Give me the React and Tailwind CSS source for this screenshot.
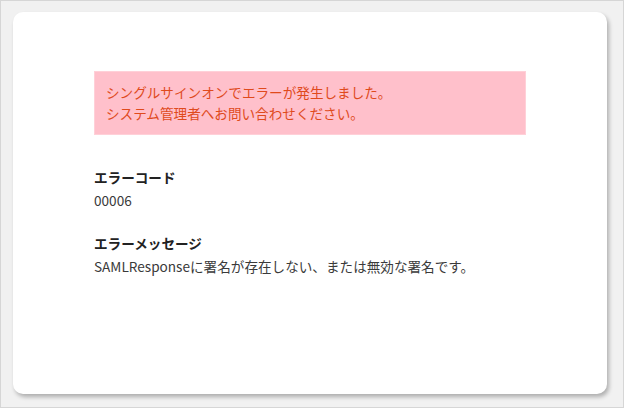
export default function App() {
  return (
    <div
      className="w-[624px] h-[408px] border border-[#d6d6d6] bg-[#f1f1f1] pt-[11px] pl-[12px] pr-[16px] pb-[13px] text-[13.6px] text-[#3a3a3a]"
      style={{ fontFamily: '"Noto Sans CJK JP", "Noto Sans", sans-serif' }}
    >
      <div className="h-full bg-white rounded-[10px] shadow-[2px_3px_4px_rgba(0,0,0,0.28)] px-[81px] pt-[59px]">
        <div className="bg-[#ffc0cb] border border-[#ffd0d8] px-[11px] py-[10px] text-[#e04a1c] leading-[21px]">
          <p>シングルサインオンでエラーが発生しました。</p>
          <p>システム管理者へお問い合わせください。</p>
        </div>
        <div className="mt-[31px] leading-[23px]">
          <p className="font-bold text-[#222]">エラーコード</p>
          <p>00006</p>
        </div>
        <div className="mt-[20px] leading-[23px]">
          <p className="font-bold text-[#222]">エラーメッセージ</p>
          <p>SAMLResponseに署名が存在しない、または無効な署名です。</p>
        </div>
      </div>
    </div>
  );
}
